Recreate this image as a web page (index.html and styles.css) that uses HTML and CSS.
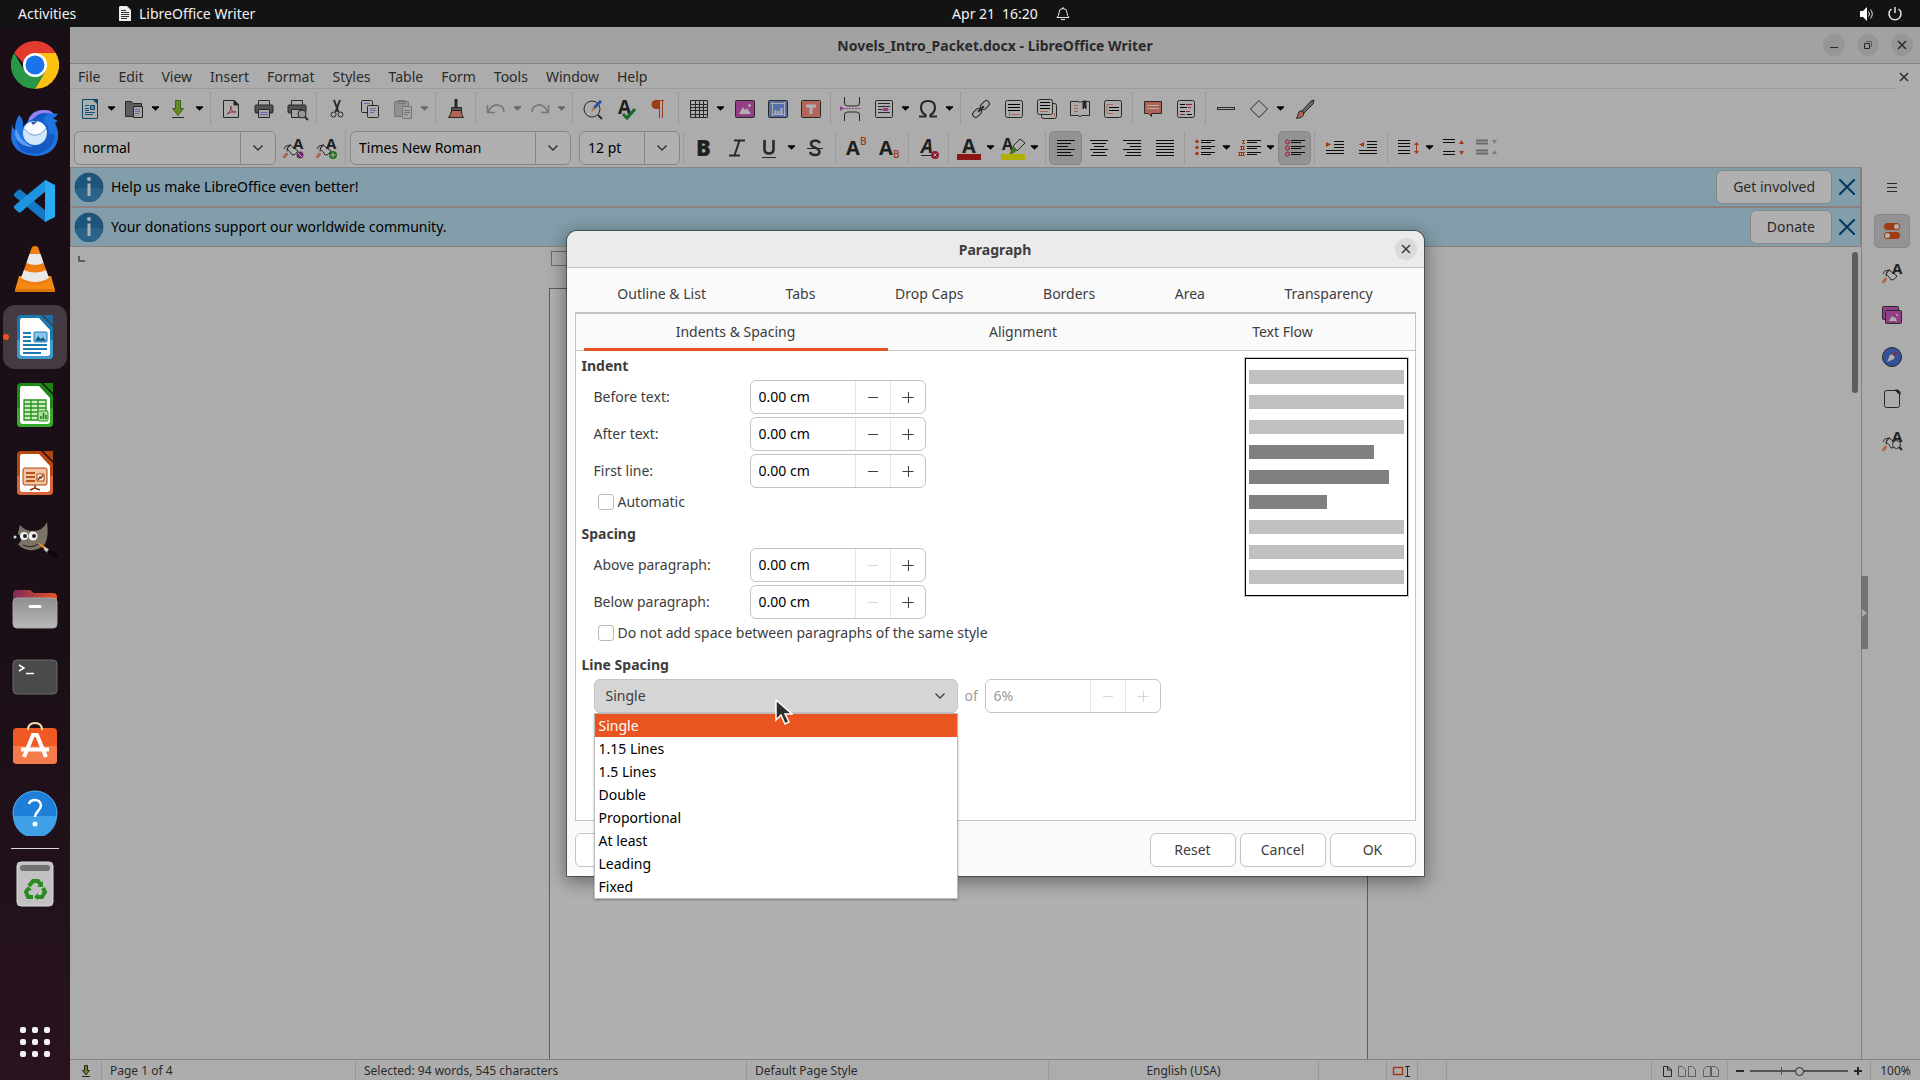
FILE: index.html
```html
<!DOCTYPE html>
<html lang="en">
<head>
<meta charset="utf-8">
<meta name="viewport" content="width=device-width, initial-scale=1">
<title>Novels_Intro_Packet.docx - LibreOffice Writer</title>
<link rel="stylesheet" href="styles.css">
</head>
<body>
<svg class="defs" aria-hidden="true">
  <symbol id="caret" viewBox="0 0 8 5"><path d="M0 0h8v1L4 5 0 1z" fill="currentColor"/></symbol>
  <symbol id="chevron" viewBox="0 0 12 12"><path d="M1.500 3.500 6 8l4.500-4.500" fill="none" stroke="currentColor" stroke-width="1.300"/></symbol>
  <symbol id="cross" viewBox="0 0 12 12"><path d="M2 2l8 8M10 2l-8 8" fill="none" stroke="currentColor" stroke-width="1.500"/></symbol>
  <symbol id="minus" viewBox="0 0 12 12"><path d="M1 6.500h10" stroke="currentColor"/></symbol>
  <symbol id="plus" viewBox="0 0 12 12"><path d="M.500 6.500h11M6.500 1v11" stroke="currentColor"/></symbol>
  <symbol id="stylebrush" viewBox="0 0 24 24"><path d="M2 21l3-4 2 1-3 4z" fill="#ff8f7d" stroke="#ff8f7d"/><path d="M3 13q1-4 6-4M6 15.500q-1-4 4-7M6 13l3-4 8 6q-3 5-6 4-1-3-5-6z" fill="#fff" stroke="#3a3a38"/><text x="12" y="13" class="glyph bold" font-size="15">A</text></symbol>
  <symbol id="info" viewBox="0 0 30 30"><circle cx="15" cy="15" r="14" fill="#2b7bb8" stroke="#3a6f95"/><path d="M1.500 17a13.500 13.500 0 0 0 27 0q-13-3-27 0z" fill="#3f8fc6"/><path d="M15 11.500V24" stroke="#fff" stroke-width="3"/><circle cx="15" cy="7" r="2" fill="#fff"/></symbol>
</svg>

<header class="topbar">
  <button class="top-btn activities">Activities</button>
  <button class="top-btn app-menu"><svg width="12" height="15" viewBox="0 0 12 15"><path d="M1 0h7l4 4v11H0V1z" fill="#eee"/><path d="M2 4.500h5M2 6.500h8M2 8.500h8M2 10.500h8M2 12.500h6" stroke="#333"/></svg>LibreOffice Writer</button>
  <button class="top-btn clock"><span>Apr 21</span><span>16:20</span><svg width="14" height="14" viewBox="0 0 14 14" fill="none" stroke="#eee"><path d="M1 10.500h12q-2-1.500-2-5a4 4 0 0 0-8 0q0 3.500-2 5zM5 12.500h4M7 0v2"/></svg></button>
  <div class="tray">
    <svg width="16" height="16" viewBox="0 0 16 16" fill="none" stroke="#eee"><path d="M1 5h3l4-4v14l-4-4H1z" fill="#fff" stroke="none"/><path d="M9.500 5.500q2 2.500 0 5M11.500 3.500q3.500 4.500 0 9"/></svg>
    <svg width="16" height="16" viewBox="0 0 16 16" fill="none" stroke="#eee" stroke-width="1.400"><path d="M4.500 3a6 6 0 1 0 7 0M8 1v6"/></svg>
  </div>
</header>

<div class="desktop">
<nav class="dock" aria-label="Dock">
  <a href="#" aria-label="Chrome"><svg width="48" height="48" viewBox="0 0 48 48"><path d="M3.200 12A24 24 0 0 1 44.800 12H24L14 24z" fill="#e33b2e"/><path d="M44.800 12A24 24 0 0 1 24 48l10.400-18L24 12z" fill="#fcc111"/><path d="M3.200 12A24 24 0 0 0 24 48l10.400-18H13.600z" fill="#2a9747"/><circle cx="24" cy="24" r="12" fill="#fff"/><circle cx="24" cy="24" r="9.500" fill="#1a73e8"/></svg></a>
  <a href="#" aria-label="Thunderbird"><svg width="48" height="48" viewBox="0 0 48 48"><path d="M8 6q5 5 4 12l5-6q2-10 14-11 8 0 10 3l6 1q-2 3-5 4 2 2 5 3l-3 2q4 8 3 15Q44 46 25 47 3 46 0 29l1-14q1 5 3 6 0-9 4-15z" fill="#1f73e0"/><path d="M20 12q5-10 17-7-6 4-4 8 5 4 5 12 5-2 6 3-5 17-22 17Q8 44 5 31q10 9 20 4z" fill="#1459c4"/><path d="M5 19q4 14 17 19Q8 38 4 26z" fill="#5d9df6"/><path d="M17 12Q21 1 33 1q8 0 9 4-12-4-19 4-2 2-6 3z" fill="#9d7ff0"/><circle cx="24" cy="24" r="12" fill="#cfe6fb"/><path d="M13 19q11 13 22 0-3-7-11-7t-11 7z" fill="#f4faff"/><path d="M13 20q11 13 22 0" fill="none" stroke="#7fa9e0"/><path d="M20 13l7-1-5 4z" fill="#2b4a99"/></svg></a>
  <a href="#" aria-label="Code"><svg width="44" height="44" viewBox="0 0 44 44"><path d="M1 15l4-4q2-1 3 0l26 22v10l-3-1L1 17z" fill="#1479c4"/><path d="M1 29l4 4q2 1 3 0L34 11V1l-3 1L1 27z" fill="#1d94dd"/><path d="M32 1l10 5v32l-10 5z" fill="#2aa9f4"/></svg></a>
  <a href="#" aria-label="VLC"><svg width="44" height="48" viewBox="0 0 44 48"><path d="M6 31h32l4 14v2H2v-2z" fill="#f58a12"/><path d="M2 44h40v3H2z" fill="#d9730a"/><path d="M19 2q3-2 6 0l12 34q-15 8-30 0z" fill="#ef7d10"/><path d="M16.500 9h11l3 9q-8 4-17 0zM11 25q11 5 22 0l3 8q-14 8-28 0z" fill="#e9e9e9"/></svg></a>
  <a href="#" class="active" aria-label="Writer"><svg width="38" height="46" viewBox="0 0 38 46"><path d="M5 1h20l12 12v28q0 4-4 4H5q-4 0-4-4V5q0-4 4-4z" fill="#1a77b0"/><path d="M1 26h36v15q0 4-4 4H5q-4 0-4-4z" fill="#3d9bd0"/><path d="M5 4h18l11 12v23q0 3-3 3H7q-3 0-3-3V6z" fill="#fff"/><path d="M27 1h10v10z" fill="#1a6fa6"/><path d="M7 19h8M7 23h8M7 27h8M7 31h24M7 35h24M7 39h18" stroke="#1b7cb4" stroke-width="2"/><rect x="18" y="18" width="13" height="10" rx="1" fill="#8cc4ea" stroke="#1b7cb4"/><path d="M19 27l3-5 3 3 2-2 3 4z" fill="#135e8c"/></svg></a>
  <a href="#" aria-label="Calc"><svg width="38" height="46" viewBox="0 0 38 46"><path d="M5 1h20l12 12v28q0 4-4 4H5q-4 0-4-4V5q0-4 4-4z" fill="#1d8a12"/><path d="M1 26h36v15q0 4-4 4H5q-4 0-4-4z" fill="#36a82a"/><path d="M5 4h18l11 12v23q0 3-3 3H7q-3 0-3-3V6z" fill="#fff"/><path d="M27 1h10v10z" fill="#1d8412"/><path d="M8 18h22v20H8zM8 22h22M8 26h22M8 30h22M8 34h22M15 18v20M22 18v20" fill="#c9efc0" stroke="#2a8f1e" stroke-width="1.300"/><rect x="22" y="29" width="10" height="10" rx="1" fill="#aee09e" stroke="#2a8f1e"/><path d="M25 37v-3M27.500 37v-6M30 37v-4" stroke="#1d7a12" stroke-width="1.500"/></svg></a>
  <a href="#" aria-label="Impress"><svg width="38" height="46" viewBox="0 0 38 46"><path d="M5 1h20l12 12v28q0 4-4 4H5q-4 0-4-4V5q0-4 4-4z" fill="#b8460f"/><path d="M1 26h36v15q0 4-4 4H5q-4 0-4-4z" fill="#d8663a"/><path d="M5 4h18l11 12v23q0 3-3 3H7q-3 0-3-3V6z" fill="#fff"/><path d="M27 1h10v10z" fill="#b04511"/><rect x="7" y="18" width="24" height="17" rx="2" fill="#f3c4a4" stroke="#a3470f"/><path d="M10 23h9M10 27h9M10 31h9" stroke="#b4541c" stroke-width="2"/><path d="M21 24h7v7h-7z" fill="#fff" stroke="#a3470f"/><path d="M22 30l2-3 1 1 2-3M19 35v3l-5 2M19 38l5 2" fill="none" stroke="#8c3a0a" stroke-width="1.500"/></svg></a>
  <a href="#" aria-label="GIMP"><svg width="48" height="40" viewBox="0 0 48 40"><path d="M9 4q5 6 13 6 10 0 14-9 2 14-2 22-6 7-16 6Q9 28 5 20z" fill="#7b7365"/><ellipse cx="5" cy="18" rx="5" ry="5.500" fill="#151515"/><circle cx="4" cy="16" r="1.500" fill="#ddd"/><circle cx="13" cy="15" r="4" fill="#eee"/><circle cx="22" cy="15" r="4.500" fill="#eee"/><circle cx="14" cy="15" r="2" fill="#222"/><circle cx="23" cy="15" r="2" fill="#222"/><path d="M12 24q8 4 15-1" stroke="#222" fill="none"/><path d="M26 21l9 5-1 3z" fill="#f0922a"/><path d="M34 26l5 3-2 3-4-3z" fill="#ccc"/><path d="M38 28q8 2 9 9-8-1-11-6z" fill="#0a0a0a"/></svg></a>
  <a href="#" aria-label="Files"><svg width="46" height="40" viewBox="0 0 46 40"><defs><linearGradient id="fg"><stop stop-color="#7f2a5a"/><stop offset="1" stop-color="#e95420"/></linearGradient><linearGradient id="gg" x2="0" y2="1"><stop stop-color="#8f8f8f"/><stop offset="1" stop-color="#b9b9b9"/></linearGradient></defs><path d="M1 5q0-4 4-4h13l4 3h19q4 0 4 4v10H1z" fill="url(#fg)"/><rect x="1" y="9" width="44" height="30" rx="4" fill="url(#gg)" stroke="#a6a6a6"/><path d="M18 17.500h10" stroke="#fff" stroke-width="3" stroke-linecap="round"/></svg></a>
  <a href="#" aria-label="Terminal"><svg width="46" height="36" viewBox="0 0 46 36"><rect x="1" y="1" width="44" height="34" rx="4" fill="#4a4a4a" stroke="#6a6a6a"/><path d="M7 6l5 3-5 3M14 14.500h8" fill="none" stroke="#fff" stroke-width="1.500"/></svg></a>
  <a href="#" aria-label="Software"><svg width="46" height="48" viewBox="0 0 46 48"><rect x="1" y="7" width="44" height="36" rx="4" fill="#ef5a24"/><path d="M1 25h44v14q0 4-4 4H5q-4 0-4-4z" fill="#f47b4c"/><path d="M16 9q0-7 7-7t7 7" fill="none" stroke="#f6d9a8" stroke-width="2"/><path d="M12 36l9-22h4l9 22M9 28.500h28" fill="none" stroke="#fff" stroke-width="4"/></svg></a>
  <a href="#" aria-label="Help"><svg width="46" height="46" viewBox="0 0 46 46"><circle cx="23" cy="23" r="22" fill="#1d7fd8" stroke="#59b2ef"/><path d="M1 26a22 22 0 0 0 44 0z" fill="#3fa0e8"/><path d="M17 14q1-4 6-4t6 5q0 3-3 6t-3 6" fill="none" stroke="#fff" stroke-width="2.500"/><circle cx="23" cy="34" r="2.500" fill="#fff"/></svg></a>
  <hr>
  <a href="#" aria-label="Trash"><svg width="38" height="46" viewBox="0 0 38 46"><rect x="1" y="1" width="36" height="44" rx="4" fill="#c2c2c2" stroke="#dcdcdc"/><rect x="4" y="4" width="30" height="6" rx="3" fill="#707070"/><g fill="none" stroke="#2c8a22" stroke-width="4"><path d="M13 25l4-5h5l3 4M27 27l2 4-3 5h-4M17 36h-5l-2-5 2-3"/></g><path d="M27 20v6h-6zM22 32v7l-4-3zM9 30l3-5 4 4z" fill="#2c8a22"/></svg></a>
  <a href="#" class="apps" aria-label="Show applications"><svg width="30" height="30" viewBox="0 0 30 30" fill="#f2f2f2"><rect width="6" height="6" rx="2"/><rect x="12" width="6" height="6" rx="2"/><rect x="24" width="6" height="6" rx="2"/><rect y="12" width="6" height="6" rx="2"/><rect x="12" y="12" width="6" height="6" rx="2"/><rect x="24" y="12" width="6" height="6" rx="2"/><rect y="24" width="6" height="6" rx="2"/><rect x="12" y="24" width="6" height="6" rx="2"/><rect x="24" y="24" width="6" height="6" rx="2"/></svg></a>
</nav>

<main class="window">
  <div class="titlebar">
    <h1>Novels_Intro_Packet.docx - LibreOffice Writer</h1>
    <div class="window-controls">
      <button class="round" aria-label="Minimize"><svg width="12" height="12" viewBox="0 0 12 12"><path d="M2 8.500h8" stroke="#3a3a38"/></svg></button>
      <button class="round" aria-label="Restore"><svg width="12" height="12" viewBox="0 0 12 12" fill="none"><path d="M2.500 4.500h5v5h-5z" stroke="#3a3a38"/><path d="M4 2.500h5.500V8" stroke="#888"/></svg></button>
      <button class="round" aria-label="Close"><svg width="12" height="12"><use href="#cross"/></svg></button>
    </div>
  </div>
  <div class="menubar">
    <nav class="menus">
      <button>File</button><button>Edit</button><button>View</button><button>Insert</button><button>Format</button><button>Styles</button><button>Table</button><button>Form</button><button>Tools</button><button>Window</button><button>Help</button>
    </nav>
    <button class="doc-close" aria-label="Close document"><svg width="12" height="12"><use href="#cross"/></svg></button>
  </div>

  <div class="toolbar" role="toolbar" aria-label="Standard">
    <span class="split"><button aria-label="New"><svg class="ic" viewBox="0 0 24 24"><path d="M4.500 2.500h12l3 3v16h-15z" stroke="#12699c"/><path d="M14 2h6v6z" fill="#12699c" stroke="none"/><path d="M7 8.500h4M7 11.500h4M7 13.500h4M7 15.500h10M7 17.500h8" stroke="#1b7cb4"/><path d="M12.500 8.500h4v4h-4z" fill="#8cc4ea" stroke="#12699c"/></svg></button><button class="drop" aria-label="New options"><svg><use href="#caret"/></svg></button></span>
    <span class="split"><button aria-label="Open"><svg class="ic" viewBox="0 0 24 24"><path d="M3.500 4.500h6l2 2h8v13h-16z" fill="#8a8a8a"/><path d="M11.500 9.500h9v11h-9z" fill="#eee"/><path d="M13 12.500h5M13 14.500h5M13 16.500h4" stroke="#9c9cff"/></svg></button><button class="drop" aria-label="Open options"><svg><use href="#caret"/></svg></button></span>
    <span class="split"><button aria-label="Save"><svg class="ic" viewBox="0 0 24 24"><path d="M9.500 3.500h5v8h3l-5.500 7-5.500-7h3z" fill="#94c93c" stroke="#5c8a28"/><path d="M6 20.500h12"/></svg></button><button class="drop" aria-label="Save options"><svg><use href="#caret"/></svg></button></span>
    <i class="sep"></i>
    <button aria-label="Export PDF"><svg class="ic" viewBox="0 0 24 24"><path d="M4.500 3.500h11l4 4v13h-15z"/><path d="M15 3v5h5" fill="#3a3a38"/><path d="M8 17q5-3 4-8-1 6 5 6-5-1-9 2z" stroke="#e0405a"/></svg></button>
    <button aria-label="Print"><svg class="ic" viewBox="0 0 24 24"><path d="M6.500 8V3.500h11V8"/><rect x="3" y="8" width="18" height="8" rx="1" fill="#777"/><path d="M6.500 12.500h11v8h-11z" fill="#eee"/><path d="M8 15.500h8M8 17.500h8" stroke="#9c9cff"/></svg></button>
    <button aria-label="Print preview"><svg class="ic" viewBox="0 0 24 24"><path d="M6.500 8V3.500h11V8"/><rect x="3" y="8" width="18" height="8" rx="1" fill="#777"/><path d="M6.500 12.500h11v8h-11z" fill="#eee"/><circle cx="17" cy="17" r="4" fill="#ddd"/><path d="M20 20l3 3" stroke-width="2"/></svg></button>
    <i class="sep"></i>
    <button aria-label="Cut"><svg class="ic" viewBox="0 0 24 24"><path d="M9 3l4.500 12M15 3l-4.500 12" stroke-width="2"/><circle cx="8.500" cy="17.500" r="2.500"/><circle cx="15.500" cy="17.500" r="2.500"/></svg></button>
    <button aria-label="Copy"><svg class="ic" viewBox="0 0 24 24"><rect x="3.500" y="3.500" width="11" height="12" rx="1"/><rect x="9.500" y="8.500" width="11" height="12" rx="1" fill="#fafafa"/><path d="M6 6.500h6M12 11.500h6M12 13.500h6M12 15.500h4" stroke="#9c9cff"/></svg></button>
    <span class="split off"><button aria-label="Paste" disabled><svg class="ic" viewBox="0 0 24 24"><rect x="3.500" y="4.500" width="14" height="15" rx="1" fill="#999"/><path d="M7 3.500h7v3H7z"/><path d="M11.500 9.500h9v12h-9z" fill="#ddd"/><path d="M13 13.500h6M13 15.500h6M13 17.500h4"/></svg></button><button class="drop" aria-label="Paste options" disabled><svg><use href="#caret"/></svg></button></span>
    <i class="sep"></i>
    <button aria-label="Clone formatting"><svg class="ic" viewBox="0 0 24 24"><path d="M12 2v8" stroke-width="3"/><path d="M7.500 10.500h10v3h-10z" fill="#777"/><path d="M7.500 13.500h10q0 5 2 7h-15q2-2 3-7z" fill="#ff8f7d"/></svg></button>
    <i class="sep"></i>
    <span class="split off"><button aria-label="Undo" disabled><svg class="ic" viewBox="0 0 24 24"><path d="M3.500 8v7.500H11M4 15q4-8 10-7 6 1 6 7" stroke-width="1.600"/></svg></button><button class="drop" aria-label="Undo options" disabled><svg><use href="#caret"/></svg></button></span>
    <span class="split off"><button aria-label="Redo" disabled><svg class="ic" viewBox="0 0 24 24"><path d="M20.500 8v7.500H13M20 15Q16 7 10 8q-6 1-6 7" stroke-width="1.600"/></svg></button><button class="drop" aria-label="Redo options" disabled><svg><use href="#caret"/></svg></button></span>
    <i class="sep"></i>
    <button aria-label="Find and replace"><svg class="ic" viewBox="0 0 24 24"><circle cx="11" cy="12" r="8"/><path d="M17 18l4 4" stroke-width="2"/><path d="M20 4l-7 7" stroke="#3a6ee8" stroke-width="3"/><path d="M13.500 10.500L11 14" stroke="#e8a85a" stroke-width="2"/></svg></button>
    <button aria-label="Spelling"><svg class="ic" viewBox="0 0 24 24"><text x="4" y="17" class="glyph bold" font-size="19">A</text><path d="M9 17l4 4 8-9" stroke="#1e9a3c" stroke-width="3"/></svg></button>
    <button aria-label="Formatting marks"><svg class="ic" viewBox="0 0 24 24"><path d="M13 3H9a4.500 4.500 0 0 0 0 9h4V3z" fill="#e8571f" stroke="none"/><path d="M12 3.500h5M12.500 3v18M15.500 3v18" stroke="#e8571f"/></svg></button>
    <i class="sep"></i>
    <span class="split"><button aria-label="Table"><svg class="ic" viewBox="0 0 24 24"><path d="M3.500 3.500h17v17h-17zM3.500 7.500h17M3.500 10.500h17M3.500 13.500h17M3.500 17.500h17M8.500 3.500v17M12.500 3.500v17M16.500 3.500v17"/></svg></button><button class="drop" aria-label="Table options"><svg><use href="#caret"/></svg></button></span>
    <button aria-label="Image"><svg class="ic" viewBox="0 0 24 24"><rect x="2.500" y="3.500" width="19" height="17" rx="1" fill="#d65ac2"/><path d="M6 17l4-7 2 3 2-2 4 6z" fill="#fff" stroke="none"/><circle cx="16.500" cy="8.500" r="1.500" fill="#fff" stroke="none"/></svg></button>
    <button aria-label="Chart"><svg class="ic" viewBox="0 0 24 24"><rect x="2.500" y="3.500" width="19" height="17" rx="1" fill="#7ba0f8"/><path d="M5 6.500h14M5.500 17.500h14M6.500 5v14M18.500 5v14" stroke="#fff"/><path d="M9.500 17v-4M12.500 17v-3M15.500 17v-6" stroke="#fff" stroke-width="2"/></svg></button>
    <button aria-label="Text box"><svg class="ic" viewBox="0 0 24 24"><rect x="2.500" y="3.500" width="19" height="17" rx="1" fill="#ff9480"/><path d="M7 9h10M12 9v8" stroke="#fff" stroke-width="3"/></svg></button>
    <i class="sep"></i>
    <button aria-label="Page break"><svg class="ic" viewBox="0 0 24 24"><path d="M5.500 0v6q0 3 3 3h9q3 0 3-3V0M5.500 24v-6q0-3 3-3h9q3 0 3 3v6"/><path d="M4 11.500h18" stroke="#d65ac2" stroke-dasharray="2 1"/><path d="M1 9l4 2.500L1 14z" fill="#d65ac2" stroke="none"/></svg></button>
    <span class="split"><button aria-label="Field"><svg class="ic" viewBox="0 0 24 24"><rect x="3.500" y="3.500" width="17" height="17" rx="1"/><path d="M6 6.500h12M6 9.500h12M6 12.500h4M6 15.500h12"/><path d="M11 11.500h5v2h-5z" fill="#d65ac2" stroke="#d65ac2"/></svg></button><button class="drop" aria-label="Field options"><svg><use href="#caret"/></svg></button></span>
    <span class="split"><button aria-label="Special character"><svg class="ic" viewBox="0 0 24 24"><path d="M3 19.500h6.500V18Q5 15 5 10.500C5 6 8 4 12 4s7 2 7 6.500Q19 15 14.500 18v1.500H21" stroke-width="2.200"/></svg></button><button class="drop" aria-label="Special character options"><svg><use href="#caret"/></svg></button></span>
    <i class="sep"></i>
    <button aria-label="Hyperlink"><svg class="ic" viewBox="0 0 24 24"><g transform="rotate(-45 12 12)"><rect x="1.500" y="9" width="10" height="6" rx="3"/><rect x="12.500" y="9" width="10" height="6" rx="3"/><path d="M8 12h8" stroke-width="2"/></g></svg></button>
    <button aria-label="Footnote"><svg class="ic" viewBox="0 0 24 24"><rect x="3.500" y="3.500" width="17" height="17" rx="2"/><path d="M6 7.500h12M6 10.500h12M6 13.500h12" stroke="#000"/><path d="M7.500 15v4M9 17.500h9" stroke="#ff8f7d"/></svg></button>
    <button aria-label="Endnote"><svg class="ic" viewBox="0 0 24 24"><rect x="6.500" y="6.500" width="15" height="15" rx="2"/><rect x="2.500" y="2.500" width="15" height="15" rx="2" fill="#fafafa"/><path d="M5 5.500h10M5 8.500h10M5 11.500h10" stroke="#000"/><path d="M5 14.500h8M19.500 16v4" stroke="#ff8f7d"/></svg></button>
    <button aria-label="Bookmark"><svg class="ic" viewBox="0 0 24 24"><path d="M2.500 4.500h8l1.500 1 1.500-1h8v14h-8L12 20l-1.500-1.500h-8z"/><path d="M15 4h3v8l-1.500-2-1.500 2z" fill="#3a3a38"/><path d="M6 8.500h4M6 11.500h4M6 14.500h4" stroke="#ff8f7d"/></svg></button>
    <button aria-label="Cross-reference"><svg class="ic" viewBox="0 0 24 24"><rect x="3.500" y="3.500" width="17" height="17" rx="2"/><path d="M8 10.500h10M8 13.500h10" stroke="#000"/><path d="M12 7.500H6v9h6" stroke="#ff8f7d"/></svg></button>
    <i class="sep"></i>
    <button aria-label="Comment"><svg class="ic" viewBox="0 0 24 24"><path d="M3.500 4.500h17v12h-10v3l-3-3h-4z" fill="#ff8f7d"/><path d="M6 8.500h12M6 11.500h12" stroke="#fff"/></svg></button>
    <button aria-label="Track changes"><svg class="ic" viewBox="0 0 24 24"><rect x="3.500" y="3.500" width="17" height="17" rx="2"/><path d="M6 7.500h5M6 14.500h5M13 17.500h5M6 10.500h7" stroke="#000"/><path d="M12 7.500h6M14 10.500h3M12 14.500h4M6 17.500h5" stroke="#d02a48"/></svg></button>
    <i class="sep"></i>
    <button aria-label="Line"><svg class="ic" viewBox="0 0 24 24"><rect x="3.500" y="10.500" width="17" height="2"/></svg></button>
    <span class="split"><button aria-label="Shapes"><svg class="ic" viewBox="0 0 24 24"><path d="M12 3.500l8.500 8.500-8.500 8.500L3.500 12z"/></svg></button><button class="drop" aria-label="Shape options"><svg><use href="#caret"/></svg></button></span>
    <button aria-label="Draw functions"><svg class="ic" viewBox="0 0 24 24"><path d="M21 3l-3 1-9 10 2 2L20 7z" fill="#999"/><path d="M9 14q-3-1-4 3 0 3-2 4 7 1 8-5z" fill="#ff8f7d"/></svg></button>
  </div>

  <div class="toolbar second" role="toolbar" aria-label="Formatting">
    <span class="combo style-combo"><input type="text" value="normal" aria-label="Paragraph style"><button aria-label="Show styles"><svg width="12" height="12"><use href="#chevron"/></svg></button></span>
    <button aria-label="Update style"><svg class="ic" viewBox="0 0 24 24"><use href="#stylebrush"/><circle cx="19" cy="19" r="3.500" fill="#a03a9a" stroke="none"/><path d="M17 17l4 4" stroke="#fff"/></svg></button>
    <button aria-label="New style"><svg class="ic" viewBox="0 0 24 24"><use href="#stylebrush"/><circle cx="19" cy="19" r="4" fill="#36a82a" stroke="none"/><path d="M16.500 19h5M19 16.500v5" stroke="#fff"/></svg></button>
    <i class="sep"></i>
    <span class="combo font-combo"><input type="text" value="Times New Roman" aria-label="Font name"><button aria-label="Show fonts"><svg width="12" height="12"><use href="#chevron"/></svg></button></span>
    <span class="combo size-combo"><input type="text" value="12 pt" aria-label="Font size"><button aria-label="Show sizes"><svg width="12" height="12"><use href="#chevron"/></svg></button></span>
    <i class="sep"></i>
    <button aria-label="Bold"><svg class="ic" viewBox="0 0 24 24"><text x="4" y="20" class="glyph black" font-size="22">B</text></svg></button>
    <button aria-label="Italic"><svg class="ic" viewBox="0 0 24 24"><path d="M9 4.500h11M4 19.500h11M14.500 4.500l-5 15" stroke-width="2"/></svg></button>
    <span class="split"><button aria-label="Underline"><svg class="ic" viewBox="0 0 24 24"><path d="M6.500 4v9q0 4.500 4.500 4.500t4.500-4.500V4" stroke-width="2.600"/><path d="M4 21.500h14"/></svg></button><button class="drop" aria-label="Underline options"><svg><use href="#caret"/></svg></button></span>
    <button aria-label="Strikethrough"><svg class="ic" viewBox="0 0 24 24"><path d="M16 7q-2-3-5-2.500-4 .5-4 3.500 0 2 4 3.500t4.500 4Q15.500 19 11 19q-4 0-5-3" stroke-width="2.400"/><path d="M3 12.500h16"/></svg></button>
    <i class="sep"></i>
    <button aria-label="Superscript"><svg class="ic" viewBox="0 0 24 24"><text x="2" y="19" class="glyph bold" font-size="20">A</text><text x="16" y="9" class="glyph accent" font-size="10">B</text></svg></button>
    <button aria-label="Subscript"><svg class="ic" viewBox="0 0 24 24"><text x="2" y="19" class="glyph bold" font-size="20">A</text><text x="16" y="22" class="glyph accent" font-size="10">B</text></svg></button>
    <i class="sep"></i>
    <button aria-label="Clear formatting"><svg class="ic" viewBox="0 0 24 24"><text x="4" y="17" class="glyph bold slant" font-size="19">A</text><path d="M4 19.500h12"/><circle cx="18" cy="19" r="4" fill="#d02a48" stroke="none"/><path d="M16.500 17.500l3 3M19.500 17.500l-3 3" stroke="#fff"/></svg></button>
    <i class="sep"></i>
    <span class="split"><button aria-label="Font color"><svg class="ic" viewBox="0 0 24 24"><text x="5" y="17" class="glyph bold" font-size="20">A</text><path d="M0 18h24v6H0z" fill="#c9211e" stroke="none"/></svg></button><button class="drop" aria-label="Font color options"><svg><use href="#caret"/></svg></button></span>
    <span class="split"><button aria-label="Highlighting"><svg class="ic" viewBox="0 0 24 24"><text x="1" y="14" class="glyph bold" font-size="16">A</text><path d="M12 10l7-7 5 4-8 8z"/><path d="M12 10l4 4-3 3-5 2z" fill="#5aa82a" stroke="none"/><path d="M0 18h24v6H0z" fill="#ff0" stroke="none"/></svg></button><button class="drop" aria-label="Highlighting options"><svg><use href="#caret"/></svg></button></span>
    <i class="sep"></i>
    <button class="pressed" aria-label="Align left"><svg class="ic lines" viewBox="0 0 24 24"><path d="M3 4.500h18M3 7.500h14M3 10.500h11M3 13.500h18M3 16.500h14M3 19.500h16"/></svg></button>
    <button aria-label="Center"><svg class="ic lines" viewBox="0 0 24 24"><path d="M3 4.500h18M5 7.500h14M7 10.500h10M3 13.500h18M6 16.500h12M4 19.500h16"/></svg></button>
    <button aria-label="Align right"><svg class="ic lines" viewBox="0 0 24 24"><path d="M3 4.500h18M7 7.500h14M10 10.500h11M3 13.500h18M7 16.500h14M5 19.500h16"/></svg></button>
    <button aria-label="Justify"><svg class="ic lines" viewBox="0 0 24 24"><path d="M3 4.500h18M3 7.500h18M3 10.500h18M3 13.500h18M3 16.500h18M3 19.500h18"/></svg></button>
    <i class="sep"></i>
    <span class="split"><button aria-label="Bullets"><svg class="ic lines" viewBox="0 0 24 24"><path d="M8 4.500h14M8 6.500h10M8 10.500h14M8 12.500h10M8 16.500h14M8 18.500h10"/><g fill="#e8571f" stroke="none"><circle cx="4" cy="5.500" r="1.700"/><circle cx="4" cy="11.500" r="1.700"/><circle cx="4" cy="17.500" r="1.700"/></g></svg></button><button class="drop" aria-label="Bullet options"><svg><use href="#caret"/></svg></button></span>
    <span class="split"><button aria-label="Numbering"><svg class="ic lines" viewBox="0 0 24 24"><path d="M10 4.500h14M10 6.500h10M10 10.500h14M10 12.500h10M10 16.500h14M10 18.500h10"/><path d="M5 4.500h3M6.500 4v4M5 7.500h3M3 10.500h5M4.500 10v4M6.500 10v4M3 13.500h5M1 16.500h7M2.500 16v4M4.500 16v4M6.500 16v4M1 19.500h7" stroke="#e8571f"/></svg></button><button class="drop" aria-label="Numbering options"><svg><use href="#caret"/></svg></button></span>
    <button class="pressed" aria-label="No list"><svg class="ic lines" viewBox="0 0 24 24"><path d="M8 4.500h14M8 6.500h10M8 10.500h14M8 12.500h10M8 16.500h14M8 18.500h10"/><g fill="#fbb" stroke="#d02a48"><circle cx="4.500" cy="6" r="2"/><circle cx="4.500" cy="12" r="2"/><circle cx="4.500" cy="18" r="2"/></g></svg></button>
    <i class="sep"></i>
    <button aria-label="Increase indent"><svg class="ic lines" viewBox="0 0 24 24"><path d="M11 5.500h10M11 8.500h10M11 11.500h10M3 14.500h18M3 17.500h18"/><path d="M3 6l5 2.500L3 11z" fill="#e8571f" stroke="none"/></svg></button>
    <button aria-label="Decrease indent"><svg class="ic lines" viewBox="0 0 24 24"><path d="M11 5.500h10M11 8.500h10M11 11.500h10M3 14.500h18M3 17.500h18"/><path d="M8 6L3 8.500 8 11z" fill="#e8571f" stroke="none"/></svg></button>
    <i class="sep"></i>
    <span class="split"><button aria-label="Line spacing"><svg class="ic lines" viewBox="0 0 24 24"><path d="M2 4.500h12M2 7.500h12M2 10.500h12M2 14.500h12M2 17.500h12"/><path d="M20.500 9v6" stroke="#e8571f"/><path d="M18 9l2.500-3L23 9zM18 15l2.500 3 2.500-3z" fill="#e8571f" stroke="none"/></svg></button><button class="drop" aria-label="Line spacing options"><svg><use href="#caret"/></svg></button></span>
    <button aria-label="Increase paragraph spacing"><svg class="ic lines" viewBox="0 0 24 24"><path d="M1 3.500h12M1 6.500h12M1 15.500h12M1 18.500h12"/><path d="M17 8l2.500-4L22 8zM17 15l2.500 4 2.500-4z" fill="#e8571f" stroke="none"/></svg></button>
    <button class="off" aria-label="Decrease paragraph spacing" disabled><svg class="ic lines" viewBox="0 0 24 24"><path d="M1 4.500h12M1 7.500h12M1 14.500h12M1 17.500h12" stroke-width="2"/><path d="M17 4l2.500 4L22 4zM17 18l2.500-4 2.500 4z" fill="#555" stroke="none"/></svg></button>
  </div>

  <div class="workspace">
    <div class="editor">
      <div class="infobar"><svg width="30" height="30"><use href="#info"/></svg><span>Help us make LibreOffice even better!</span><button class="btn">Get involved</button><button class="dismiss" aria-label="Close infobar"><svg width="16" height="16" viewBox="0 0 16 16"><path d="M0 0l16 16M16 0L0 16" stroke="#045090" stroke-width="2"/></svg></button></div>
      <div class="infobar"><svg width="30" height="30"><use href="#info"/></svg><span>Your donations support our worldwide community.</span><button class="btn">Donate</button><button class="dismiss" aria-label="Close infobar"><svg width="16" height="16" viewBox="0 0 16 16"><path d="M0 0l16 16M16 0L0 16" stroke="#045090" stroke-width="2"/></svg></button></div>
      <div class="docview">
        <div class="canvas">
          <i class="tabmark"></i>
          <div class="ruler"></div>
          <div class="page"></div>
        </div>
        <div class="scrollbar"><i></i></div>
      </div>
    </div>
    <aside class="sidebar">
      <i class="handle"><svg width="5" height="8" viewBox="0 0 5 8"><path d="M0 0l5 4-5 4z" fill="#fafafa"/></svg></i>
      <button aria-label="Sidebar settings"><svg class="ic" viewBox="0 0 24 24"><path d="M7 6.500h10M7 10.500h10M7 14.500h10"/></svg></button>
      <button class="pressed" aria-label="Properties"><svg class="ic" viewBox="0 0 24 24"><rect x="4" y="4" width="16" height="7" rx="3.500" fill="#e8571f" stroke="none"/><rect x="4" y="13" width="16" height="7" rx="3.500" fill="#e8571f" stroke="none"/><circle cx="16.500" cy="7.500" r="2.500" fill="#fff" stroke="none"/><circle cx="7.500" cy="16.500" r="2.500" fill="#fff" stroke="none"/></svg></button>
      <button aria-label="Styles"><svg class="ic"><use href="#stylebrush"/></svg></button>
      <button aria-label="Gallery"><svg class="ic" viewBox="0 0 24 24"><rect x="2.500" y="3.500" width="16" height="13" rx="1" fill="#d65ac2"/><rect x="5.500" y="7.500" width="16" height="13" rx="1" fill="#d65ac2"/><path d="M9 18l3-5 2 2 1-1 2 4z" fill="#fff" stroke="none"/><circle cx="17" cy="12" r="1" fill="#fff" stroke="none"/></svg></button>
      <button aria-label="Navigator"><svg class="ic" viewBox="0 0 24 24"><circle cx="12" cy="12" r="9.500" fill="#4a77e0"/><path d="M7 17l3-7 4 4z" fill="#fff" stroke="none"/><circle cx="12" cy="12" r="2.500" fill="#fff" stroke="none"/><path d="M12 9l5-2-2 5z" fill="#e03a4a" stroke="none"/></svg></button>
      <button aria-label="Page"><svg class="ic" viewBox="0 0 24 24"><rect x="4.500" y="3.500" width="15" height="17" rx="2"/><path d="M15 3h3l2 2v3z" fill="#3a3a38"/></svg></button>
      <button aria-label="Style inspector"><svg class="ic" viewBox="0 0 24 24"><use href="#stylebrush"/><circle cx="16.500" cy="15.500" r="4" fill="#fafafa"/><path d="M19 18l3 3" stroke-width="2"/></svg></button>
    </aside>
  </div>

  <footer class="statusbar">
    <span class="center"><svg width="12" height="14" viewBox="0 0 12 14"><path d="M4.500 1.500h3v5h2L6 11 2.500 6.500h2z" fill="#94c93c" stroke="#3a3a38"/><path d="M2 12.500h8" stroke="#3a3a38"/></svg></span>
    <span>Page 1 of 4</span>
    <span>Selected: 94 words, 545 characters</span>
    <span>Default Page Style</span>
    <span class="center">English (USA)</span>
    <span></span>
    <span class="center"><svg width="20" height="14" viewBox="0 0 20 14" fill="none"><path d="M1.500 3.500h9v7h-9z" stroke="#e8571f" stroke-width="1.500"/><path d="M13 2.500h5M15.500 2v10M13 12.500h5" stroke="#3a3a38"/></svg></span>
    <span></span>
    <span></span>
    <span class="center"><svg width="58" height="14" viewBox="0 0 58 14" fill="none"><path d="M2.500 2.500h4l4 3v7h-8zM6.500 2v4h4" stroke="#3a3a38"/><path d="M17.500 2.500h4l3 3v7h-7zM27.500 2.500h4l3 3v7h-7zM42.500 5.500l3-3h4v10h-7zM50.500 2.500h4l3 3v7h-7z" stroke="#8a8a8a"/></svg></span>
    <span class="center"><svg width="10" height="10" viewBox="0 0 10 10"><path d="M1 5h8" stroke="#3a3a38" stroke-width="2"/></svg><input type="range" min="0" max="100" value="50" aria-label="Zoom"><svg width="10" height="10" viewBox="0 0 10 10"><path d="M1 5h8M5 1v8" stroke="#3a3a38" stroke-width="2"/></svg></span>
    <span class="center">100%</span>
  </footer>

  <div class="modal-layer">
    <section class="dialog" role="dialog" aria-label="Paragraph">
      <div class="dialog-title">
        <h2>Paragraph</h2>
        <button class="round" aria-label="Close dialog"><svg width="12" height="12"><use href="#cross"/></svg></button>
      </div>
      <div class="dialog-body">
        <div class="tabs upper"><button>Outline &amp; List</button><button>Tabs</button><button>Drop Caps</button><button>Borders</button><button>Area</button><button>Transparency</button></div>
        <div class="notebook">
          <div class="tabs lower"><button class="current">Indents &amp; Spacing</button><button>Alignment</button><button>Text Flow</button></div>
          <form class="panel">
            <div class="fields">
              <h3>Indent</h3>
              <div class="row"><label for="before">Before text:</label><span class="spin"><input id="before" type="text" value="0.00 cm"><button type="button" aria-label="Decrease"><svg><use href="#minus"/></svg></button><button type="button" aria-label="Increase"><svg><use href="#plus"/></svg></button></span></div>
              <div class="row"><label for="after">After text:</label><span class="spin"><input id="after" type="text" value="0.00 cm"><button type="button" aria-label="Decrease"><svg><use href="#minus"/></svg></button><button type="button" aria-label="Increase"><svg><use href="#plus"/></svg></button></span></div>
              <div class="row"><label for="first">First line:</label><span class="spin"><input id="first" type="text" value="0.00 cm"><button type="button" aria-label="Decrease"><svg><use href="#minus"/></svg></button><button type="button" aria-label="Increase"><svg><use href="#plus"/></svg></button></span></div>
              <label class="check"><input type="checkbox">Automatic</label>
              <h3>Spacing</h3>
              <div class="row"><label for="above">Above paragraph:</label><span class="spin"><input id="above" type="text" value="0.00 cm"><button type="button" aria-label="Decrease" disabled><svg><use href="#minus"/></svg></button><button type="button" aria-label="Increase"><svg><use href="#plus"/></svg></button></span></div>
              <div class="row"><label for="below">Below paragraph:</label><span class="spin"><input id="below" type="text" value="0.00 cm"><button type="button" aria-label="Decrease" disabled><svg><use href="#minus"/></svg></button><button type="button" aria-label="Increase"><svg><use href="#plus"/></svg></button></span></div>
              <label class="check"><input type="checkbox">Do not add space between paragraphs of the same style</label>
              <h3>Line Spacing</h3>
              <div class="row">
                <div class="dropdown">
                  <select aria-label="Line spacing"><option>Single</option></select>
                  <svg class="arrow" width="12" height="12"><use href="#chevron"/></svg>
                  <ul class="options" role="listbox">
                    <li class="chosen" role="option">Single</li><li role="option">1.15 Lines</li><li role="option">1.5 Lines</li><li role="option">Double</li><li role="option">Proportional</li><li role="option">At least</li><li role="option">Leading</li><li role="option">Fixed</li>
                  </ul>
                  <svg class="pointer" width="18" height="28" viewBox="0 0 18 28"><path d="M1 1v20l5-5 4 9 4-2-4-8h7z" fill="#2e2e2e" stroke="#fff" stroke-width="1.500"/></svg>
                </div>
                <label class="of" for="value">of</label>
                <span class="spin"><input id="value" type="text" value="6%" disabled><button type="button" aria-label="Decrease" disabled><svg><use href="#minus"/></svg></button><button type="button" aria-label="Increase" disabled><svg><use href="#plus"/></svg></button></span>
              </div>
            </div>
            <div class="preview"><i></i><i></i><i></i><i class="dark w1"></i><i class="dark w2"></i><i class="dark w3"></i><i></i><i></i><i></i></div>
          </form>
        </div>
        <div class="actions"><button class="btn" aria-label="Help"></button><i class="grow"></i><button class="btn">Reset</button><button class="btn">Cancel</button><button class="btn">OK</button></div>
      </div>
    </section>
  </div>
</main>
</div>
</body>
</html>
```
FILE: styles.css
```css
* { box-sizing: border-box; }

body {
  margin: 0;
  height: 100vh;
  display: flex;
  flex-direction: column;
  overflow: hidden;
  font: 14px/20px "Noto Sans", "Open Sans", sans-serif;
  color: #3d3d3d;
}

button, input, select { font: inherit; color: inherit; margin: 0; padding: 0; border: 0; background: none; }
button { display: flex; align-items: center; justify-content: center; }
h1, h2, h3 { margin: 0; font-size: 14px; line-height: 20px; font-weight: 700; }
svg { display: block; flex: none; }
.defs { position: absolute; width: 0; height: 0; }

/* Top panel */
.topbar {
  height: 27px;
  flex: none;
  display: grid;
  grid-template-columns: 102px 1fr auto 1fr;
  align-items: center;
  background: #131313;
  color: #f2f2f2;
}
.top-btn { justify-content: flex-start; gap: 8px; white-space: nowrap; }
.activities { padding-left: 18px; }
.app-menu { padding-left: 17px; }
.clock { gap: 7px; }
.clock svg { margin-left: 11px; }
.tray { display: flex; justify-content: flex-end; gap: 12px; padding-right: 17px; }

.desktop { flex: 1; display: flex; min-height: 0; }

/* Dock */
.dock {
  width: 70px;
  flex: none;
  display: flex;
  flex-direction: column;
  align-items: center;
  gap: 4px;
  padding: 6px 0;
  background: linear-gradient(#1b0f17 60%, #28131f);
}
.dock a { width: 64px; height: 64px; flex: none; display: flex; align-items: center; justify-content: center; border-radius: 12px; position: relative; }
.dock .active { background: #443a41; }
.dock .active::before { content: ""; position: absolute; left: 0; width: 6px; height: 6px; border-radius: 3px; background: #e95420; }
.dock hr { width: 48px; height: 1px; margin: -1px 0; border: 0; background: #d5d5d5; }
.dock .apps { margin-top: auto; }

/* Writer window */
.window { flex: 1; min-width: 0; display: flex; flex-direction: column; position: relative; background: #fafafa; }
.titlebar { height: 37px; flex: none; display: flex; align-items: center; justify-content: center; position: relative; background: #ebebeb; border-bottom: 1px solid #bfbfbf; }
.titlebar h1, .dialog-title h2 { padding-top: 1px; }
.window-controls { position: absolute; right: 7px; display: flex; gap: 12px; }
.round { width: 22px; height: 22px; border-radius: 11px; background: #dadada; color: #3a3a3a; }
.menubar { height: 25px; flex: none; display: flex; }
.menus { flex: 1; display: flex; gap: 18px; padding: 2px 0 0 8px; border-bottom: 1px solid #e0e0e0; }
.doc-close { width: 24px; padding-right: 8px; }

.toolbar { height: 39px; flex: none; display: flex; align-items: center; padding-left: 3px; }
.toolbar.second { padding-left: 4px; }
.toolbar button { width: 33px; height: 34px; flex: none; border-radius: 5px; }
.toolbar .pressed, .sidebar .pressed { background: #d5d5d5; border: 1px solid #c2c2c2; }
.split { display: flex; width: 46px; }
.split + .split { margin-left: -2px; }
.toolbar .drop { width: 13px; padding-right: 2px; color: #000; }
.drop svg { width: 7px; height: 5px; }
.off { opacity: .4; }
.sep { width: 1px; height: 33px; margin: 0 3px; flex: none; background: #e0e0e0; }
.ic { width: 24px; height: 24px; fill: none; stroke: #3a3a38; overflow: visible; }
.lines { stroke: #111; }
.glyph { fill: #2e2e2e; stroke: none; font-family: "Open Sans", sans-serif; }
.bold { font-weight: 700; }
.black { font-weight: 800; }
.slant { font-style: italic; }
.accent { fill: #e8571f; font-weight: 600; }

.combo { display: flex; height: 34px; border: 1px solid #c4c4c4; border-radius: 6px; background: #fff; color: #000; overflow: hidden; }
.combo input { flex: 1; min-width: 0; padding-left: 8px; }
.combo button { width: 35px; height: 32px; border-left: 1px solid #c4c4c4; border-radius: 0; color: #3d3d3d; }
.style-combo { width: 202px; }
.font-combo { width: 221px; margin-left: 1px; }
.size-combo { width: 101px; margin-left: 8px; }

.workspace { flex: 1; display: flex; min-height: 0; }
.editor { flex: 1; display: flex; flex-direction: column; min-width: 0; }
.infobar { height: 40px; flex: none; display: flex; align-items: center; gap: 7px; padding: 0 5px 0 3px; background: #bde5f8; border: 1px solid #cdbcba; color: #000; }
.infobar span { flex: 1; }
.infobar .btn { padding: 0 16px; color: #3d3d3d; }
.btn { height: 34px; border: 1px solid #c4c4c4; border-radius: 6px; background: #fff; }
.docview { flex: 1; display: flex; min-height: 0; }
.canvas { flex: 1; display: flex; flex-direction: column; align-items: center; padding-top: 4px; position: relative; }
.tabmark { position: absolute; left: 8px; top: 9px; width: 7px; height: 6px; border: solid #888; border-width: 0 0 2px 2px; }
.ruler { width: 815px; height: 15px; flex: none; border: 1px solid #999; }
.page { width: 819px; flex: 1; margin-top: 22px; background: #fff; border: 1px solid #868686; border-bottom: 0; }
.scrollbar { width: 14px; padding: 5px 4px 0 5px; }
.scrollbar i { display: block; width: 6px; height: 141px; border-radius: 3px; background: #868686; }

.sidebar { width: 59px; flex: none; position: relative; display: flex; flex-direction: column; align-items: center; gap: 8px; padding: 5px 0 0 2px; border-left: 1px solid #bdbdbd; }
.sidebar button { width: 36px; height: 34px; flex: none; border-radius: 5px; }
.handle { position: absolute; left: -1px; top: 50%; width: 7px; height: 73px; margin-top: -37px; display: flex; align-items: center; justify-content: center; background: #a8a8a8; }

.statusbar {
  height: 21px;
  flex: none;
  display: grid;
  grid-template-columns: 32px 254fr 391fr 302fr 270fr 68px 31px 29px 205fr 76px 143px 49px;
  padding-top: 1px;
  border-top: 1px solid #bdbdbd;
  font-size: 12px;
  line-height: 20px;
}
.statusbar span { display: flex; align-items: center; padding-left: 8px; border-right: 1px solid #dcdcdc; white-space: nowrap; }
.statusbar .center { justify-content: center; padding: 0; }
.statusbar span:last-child { border: 0; }
.statusbar input { width: 98px; height: 14px; margin: 0 5px; appearance: none; background: linear-gradient(#777, #777) 31px 50% / 1px 8px no-repeat, linear-gradient(#777, #777) center / 100% 2px no-repeat; }
.statusbar input::-webkit-slider-thumb { appearance: none; width: 9px; height: 9px; border: 1px solid #3a3a38; border-radius: 5px; background: #fafafa; }

/* Paragraph dialog */
.modal-layer { position: absolute; inset: 0; display: flex; align-items: center; justify-content: center; background: rgba(0, 0, 0, .31); }
.dialog { width: 857px; border-radius: 10px 10px 0 0; background: #fafafa; box-shadow: 0 0 0 1px rgba(0, 0, 0, .4), 0 4px 18px 2px rgba(0, 0, 0, .4); }
.dialog-title { height: 37px; display: flex; align-items: center; justify-content: center; position: relative; background: #ebebeb; border-bottom: 1px solid #bfbfbf; border-radius: 10px 10px 0 0; }
.dialog-title .round { position: absolute; right: 7px; }
.dialog-body { padding: 8px 8px 9px; }
.tabs button { height: 36px; white-space: nowrap; }
.upper { display: flex; padding: 0 3px; }
.upper button { flex: 1 1 auto; }
.notebook { border: 1px solid #c4c4c4; border-top-width: 2px; background: #fff; }
.lower { display: grid; grid-template-columns: 304fr 271fr 248fr; padding: 0 8px; background: #fafafa; box-shadow: inset 0 -1px #c4c4c4; }
.lower button { border: solid transparent; border-width: 2px 0 3px; height: 37px; }
.lower .current { border-bottom-color: #e95420; }
.panel { min-height: 469px; display: flex; justify-content: space-between; align-items: flex-start; padding: 5px 6px 0; }
.fields { display: flex; flex-direction: column; gap: 3px; }
.fields h3 { margin-top: 8px; padding-bottom: 1px; }
.fields h3:first-child { margin-top: 0; }
.row { display: flex; align-items: center; padding-left: 12px; }
.row > label { width: 156px; }
.row .of { width: 27px; padding-left: 7px; color: #a0a0a0; }
.spin { width: 176px; height: 34px; display: flex; border: 1px solid #c4c4c4; border-radius: 6px; background: #fff; }
.spin input { flex: 1; min-width: 0; padding-left: 8px; color: #000; }
.spin button { width: 35px; border-left: 1px solid #e6e6e6; }
.spin svg { width: 12px; height: 12px; }
.spin :disabled { color: #d8d8d8; }
.spin input:disabled { color: #9a9a9a; }
.check { display: flex; align-items: center; gap: 4px; height: 22px; padding-left: 16px; }
.check input { appearance: none; width: 16px; height: 16px; border: 1px solid #bfb9b4; border-radius: 3px; background: #fff; }
.dropdown { position: relative; width: 364px; }
.dropdown select { appearance: none; width: 100%; height: 34px; display: block; padding-left: 11px; border: 1px solid #c4c4c4; border-radius: 6px; background: #d5d5d5; }
.arrow { position: absolute; right: 12px; top: 11px; }
.options { position: absolute; left: 0; right: 0; top: 34px; margin: 0; padding: 0; list-style: none; border: 1px solid #bdbdbd; background: #fff; color: #000; box-shadow: 0 1px 2px rgba(0, 0, 0, .3); }
.options li { height: 23px; line-height: 23px; padding-left: 4px; }
.options .chosen { background: #e95420; color: #fff; }
.pointer { position: absolute; left: 181px; top: 20px; }
.preview { width: 163px; height: 238px; display: flex; flex-direction: column; gap: 11px; margin: 2px 1px 0 0; padding: 11px 3px; border: 1px solid #000; outline: 1px solid #c4c4c4; background: #fff; }
.preview i { height: 14px; background: #c0c0c0; }
.preview .dark { background: #808080; }
.preview .w1 { width: 125px; }
.preview .w2 { width: 140px; }
.preview .w3 { width: 78px; }
.actions { display: flex; gap: 4px; padding-top: 12px; }
.actions .btn { width: 86px; }
.grow { flex: 1; }
```
